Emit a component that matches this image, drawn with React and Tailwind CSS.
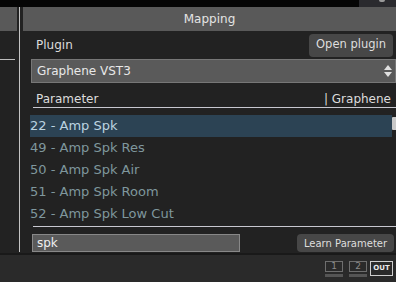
import React from "react";

const rows = [
  "22 - Amp Spk",
  "49 - Amp Spk Res",
  "50 - Amp Spk Air",
  "51 - Amp Spk Room",
  "52 - Amp Spk Low Cut",
];

function PortBox({ label }) {
  return (
    <div className="flex flex-col items-stretch w-[18px]">
      <div className="h-[11px] border border-[#6e6e6e] text-[#8a8a8a] text-[9px] leading-[9px] text-center overflow-hidden">
        {label}
      </div>
      <div className="mt-[2px] h-[3px] bg-[#555]" />
    </div>
  );
}

export default function App() {
  return (
    <div
      className="w-[396px] h-[282px] bg-[#222222] flex flex-col overflow-hidden text-[#dcdcdc]"
      style={{ fontFamily: '"DejaVu Sans", sans-serif' }}
    >
      {/* top strip */}
      <div className="h-[7px] bg-[#050505] flex justify-end">
        <div className="w-[37px] bg-[#2a2a2e] flex justify-center">
          <div className="w-[6px] h-[2px] bg-[#9a9a9a] rounded-b-full ml-[8px]" />
        </div>
      </div>

      {/* middle */}
      <div className="flex h-[246px]">
        {/* left panel */}
        <div className="w-[17px] flex flex-col">
          <div className="h-[24px] bg-[#595959]" />
          <div className="mt-[28px] h-[1px] w-[15px] bg-[#bcbcbc]" />
        </div>
        <div className="ml-[2px] w-[1px] h-[245px] bg-[#c4c4c4]" />

        {/* main panel */}
        <div className="ml-[3px] flex-1 flex flex-col">
          <div className="h-[24px] bg-[#595959] flex items-center justify-center text-[12px] text-[#e4e4e4]">
            Mapping
          </div>

          <div className="h-[28px] flex items-center justify-between pl-[13px] pr-[3px]">
            <span className="text-[12px]">Plugin</span>
            <button className="h-[23px] px-[7px] rounded-[4px] bg-[#474747] text-[11.5px] text-[#dedede] whitespace-nowrap">
              Open plugin
            </button>
          </div>

          <div className="ml-[8px] h-[24px] bg-[#5a5a5a] border border-[#777] flex items-center justify-between pl-[5px] pr-[3px]">
            <span className="text-[12px] text-[#e8e8e8]">Graphene VST3</span>
            <svg width="8" height="12" viewBox="0 0 8 12">
              <path d="M4 0 L8 5 L0 5 Z" fill="#e0e0e0" />
              <path d="M0 7 L8 7 L4 12 Z" fill="#e0e0e0" />
            </svg>
          </div>

          <div className="ml-[10px] mt-[1px] h-[24px] border-b border-[#c8c8d0] flex items-end justify-between pl-[3px] pr-[5px]">
            <span className="text-[12px] leading-[15px]">Parameter</span>
            <span className="text-[12px] leading-[15px]">| Graphene</span>
          </div>

          <div className="mt-[7px] ml-[7px] flex">
            <div className="flex-1 flex flex-col">
              {rows.map((r, i) => (
                <div
                  key={r}
                  className={
                    "h-[22px] flex items-center text-[13px] " +
                    (i === 0 ? "bg-[#2c4354] text-[#bcd4e0]" : "text-[#7f979d]")
                  }
                >
                  {r}
                </div>
              ))}
            </div>
            <div className="w-[4px] flex flex-col">
              <div className="h-[13px] mt-[2px] bg-[#c8c8c8] rounded-l-[1px]" />
            </div>
          </div>

          <div className="ml-[10px] mt-[1px] h-[1px] bg-[#c8c8d0]" />

          <div className="mt-[7px] ml-[9px] mr-[2px] flex items-center justify-between">
            <div className="w-[208px] h-[18px] bg-[#5a5a5a] border border-[#888] flex items-center pl-[4px] text-[12px] text-[#f0f0f0]">
              spk
            </div>
            <button className="h-[18px] w-[97px] rounded-[4px] bg-[#474747] text-[10px] text-[#dedede] whitespace-nowrap">
              Learn Parameter
            </button>
          </div>
        </div>
      </div>

      {/* bottom bar */}
      <div className="flex-1 border-t-2 border-[#191919] bg-[#2a2a2a] flex items-start justify-end pt-[6px] pr-[3px] gap-[6px]">
        <PortBox label="1" />
        <PortBox label="2" />
        <div className="w-[23px] h-[15px] -ml-[3px] border border-[#cfcfcf] text-[7px] font-bold text-[#e8e8e8] flex items-center justify-center">
          OUT
        </div>
      </div>
    </div>
  );
}
